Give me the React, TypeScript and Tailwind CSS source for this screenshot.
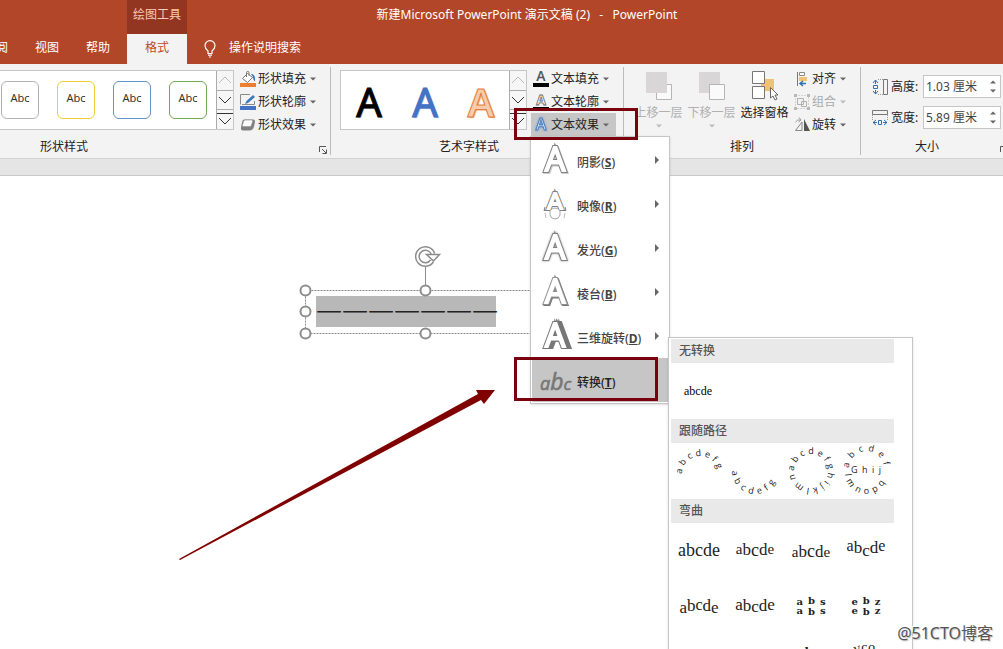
import React from 'react';

type IconKind = 'shadow' | 'reflection' | 'glow' | 'bevel' | 'rotate3d' | 'transform';

interface EffectItem {
  label: string;
  hotkey: string;
  icon: IconKind;
}

const shapeStyles = [
  'border-[#b0b0b0]',
  'border-[#f0cc3c]',
  'border-[#5f94cc]',
  'border-[#76a850]',
];

const effects: EffectItem[] = [
  { label: '阴影', hotkey: 'S', icon: 'shadow' },
  { label: '映像', hotkey: 'R', icon: 'reflection' },
  { label: '发光', hotkey: 'G', icon: 'glow' },
  { label: '棱台', hotkey: 'B', icon: 'bevel' },
  { label: '三维旋转', hotkey: 'D', icon: 'rotate3d' },
  { label: '转换', hotkey: 'T', icon: 'transform' },
];

// size and baseline of each letter in a warp preview
const warps: { size: number; y: number }[][] = [
  [18, 18, 18, 18, 18].map((size) => ({ size, y: 33 })),
  [{ size: 15, y: 31 }, { size: 17, y: 32 }, { size: 18, y: 33 }, { size: 17, y: 32 }, { size: 15, y: 31 }],
  [{ size: 15, y: 34 }, { size: 17, y: 34 }, { size: 18, y: 34 }, { size: 17, y: 34 }, { size: 15, y: 34 }],
  [{ size: 16, y: 28 }, { size: 17, y: 30 }, { size: 17, y: 33 }, { size: 17, y: 30 }, { size: 16, y: 28 }],
  [{ size: 17, y: 34 }, { size: 17, y: 32 }, { size: 16, y: 31 }, { size: 17, y: 32 }, { size: 17, y: 34 }],
  [{ size: 17, y: 31 }, { size: 17, y: 32 }, { size: 17, y: 33 }, { size: 17, y: 32 }, { size: 17, y: 31 }],
];

const Caret: React.FC<{ className?: string }> = ({ className = 'text-[#666]' }) => (
  <svg className={`h-1 w-[6px] shrink-0 ${className}`} viewBox="0 0 6 4" fill="currentColor" aria-hidden="true">
    <path d="M0 .5h6L3 3.5z" />
  </svg>
);

const Launcher: React.FC<{ label: string }> = ({ label }) => (
  <button aria-label={label} className="h-[10px] w-[10px] shrink-0 self-end">
    <svg viewBox="0 0 10 10" className="h-[10px] w-[10px]" fill="none" stroke="#555" aria-hidden="true">
      <path d="M1.5 7V1.5H8M4 4l4 4M8.5 4.5V8.5H4.5" />
    </svg>
  </button>
);

const GalleryScroll: React.FC = () => (
  <div className="flex w-[17px] shrink-0 flex-col border-l border-[#ababab] bg-[#f6f6f6]">
    <button aria-label="上一行" className="flex flex-1 items-center justify-center border-b border-[#ababab]">
      <svg viewBox="0 0 14 8" className="h-2 w-[14px]" fill="none" stroke="#bbb" aria-hidden="true">
        <path d="M1 7l6-6 6 6" />
      </svg>
    </button>
    <button aria-label="下一行" className="flex flex-1 items-center justify-center border-b border-[#ababab]">
      <svg viewBox="0 0 14 8" className="h-2 w-[14px]" fill="none" stroke="#333" aria-hidden="true">
        <path d="M1 1l6 6 6-6" />
      </svg>
    </button>
    <button aria-label="其他" className="flex flex-1 items-center justify-center">
      <svg viewBox="0 0 16 16" className="h-4 w-4" fill="none" stroke="#333" aria-hidden="true">
        <path d="M0 1.5h16M2 6l6 6 6-6" />
      </svg>
    </button>
  </div>
);

const BulbIcon = () => (
  <svg viewBox="0 0 12 18" className="h-[18px] w-3" fill="none" stroke="#fff" strokeWidth="1.2" aria-hidden="true">
    <path d="M4 13.5V11Q1 8.500 1 5.700a5 5 0 0 1 10 0Q11 8.500 8 11v2.500zM4 15.200h4M5 17h2" />
  </svg>
);

const FillIcon = () => (
  <svg viewBox="0 0 16 16" className="h-4 w-4 shrink-0" fill="none" aria-hidden="true">
    <path d="M7.5 2.500l5 4-5 5-5-4z" fill="#fff" stroke="#777" />
    <path d="M6.5 6V1.500c0-1.500 2.500-1.500 2.500 0v3" stroke="#777" />
    <path d="M11 3c3 0 4.500 2 4 7.500-1.500-1-2-3-2-4.500z" fill="#3b78b8" />
    <path d="M0 12h16v4H0z" fill="#ed7d31" />
  </svg>
);

const OutlineIcon = () => (
  <svg viewBox="0 0 16 16" className="h-4 w-4 shrink-0" fill="none" aria-hidden="true">
    <path d="M10 .5H.5v10M2 10.500h12.500V7" stroke="#8a8a8a" />
    <path d="M13 1l2 2-7 6-3 1 1.500-3z" fill="#3b78b8" />
    <path d="M0 12h16v4H0z" fill="#4472c4" />
  </svg>
);

const EffectIcon = () => (
  <svg viewBox="0 0 16 16" className="h-4 w-4 shrink-0" aria-hidden="true">
    <path d="M4 2.500h9.500q1.500 0 1.500 2l-1 5q-1 4-4.500 4H3q-2.500 0-2-3l1-5q.5-3 2-3z" fill="#808080" />
    <path d="M5 3h6.500q1.500 0 1 1.500l-1 3.500q-.5 1.500-2 1.500H3.500Q2 9.500 2.500 8l1-3.500Q4 3 5 3z" fill="#fff" stroke="#999" strokeWidth=".7" />
  </svg>
);

const TextFillIcon = () => (
  <svg viewBox="0 0 16 16" className="h-4 w-4 shrink-0 overflow-visible font-['Open_Sans',sans-serif]" aria-hidden="true">
    <text x="8" y="10" textAnchor="middle" fontSize="14" fontWeight="600" fill="#555">A</text>
    <path d="M0 12h16v4H0z" />
  </svg>
);

const TextOutlineIcon = () => (
  <svg viewBox="0 0 16 16" className="h-4 w-4 shrink-0 overflow-visible font-['Open_Sans',sans-serif]" aria-hidden="true">
    <text x="8" y="11" textAnchor="middle" fontSize="14" fontWeight="700" fill="#fff" stroke="#666" strokeWidth=".8">A</text>
    <path d="M0 13h16v3H0z" />
  </svg>
);

const TextEffectIcon = () => (
  <svg viewBox="0 0 16 16" className="h-4 w-4 shrink-0 overflow-visible font-['Open_Sans',sans-serif]" aria-hidden="true">
    <text
      x="8"
      y="13"
      textAnchor="middle"
      fontSize="16"
      fontWeight="600"
      fill="#e8f0fa"
      stroke="#4a7dbd"
      className="[filter:drop-shadow(0_0_1px_#6b9bd8)]"
    >
      A
    </text>
  </svg>
);

const AlignIcon = () => (
  <svg viewBox="0 0 16 16" className="h-4 w-4 shrink-0" fill="none" aria-hidden="true">
    <path d="M3.5 1v14" stroke="#777" />
    <path d="M5.5 1.500h5v3h-5z" stroke="#888" fill="#fff" />
    <path d="M5 6h8v4H5z" fill="#efc274" />
    <path d="M12 12.500H6M9 10l-3 2.500L9 15" stroke="#2f6fb2" strokeWidth="1.5" />
  </svg>
);

const GroupIcon = () => (
  <svg viewBox="0 0 16 16" className="h-4 w-4 shrink-0" fill="none" stroke="#b0b0b0" aria-hidden="true">
    <path d="M1.5 1.500h13v13h-13z" strokeDasharray="1 2" />
    <path d="M3.500 4.500h6v6h-6zM7.500 7.500h5v5h-5z" />
    <path d="M0 0h3v3H0zM13 0h3v3h-3zM0 13h3v3H0zM13 13h3v3h-3z" fill="#b8b8b8" stroke="none" />
  </svg>
);

const RotateIcon = () => (
  <svg viewBox="0 0 16 16" className="h-4 w-4 shrink-0" fill="none" aria-hidden="true">
    <path d="M10 2v12h6z" fill="#555" />
    <path d="M8 5v8.500H1.500z" stroke="#888" />
    <path d="M1.500 5q2-3 5-2M5 .5L7 3 4.500 5" stroke="#999" />
  </svg>
);

const HeightIcon = () => (
  <svg viewBox="0 0 16 16" className="h-4 w-4 shrink-0" fill="none" aria-hidden="true">
    <path d="M11.500.5h4v15h-4z" stroke="#777" />
    <path d="M6 .5h5M6 15.500h5" stroke="#999" strokeDasharray="1 1" />
    <path d="M3.500 1v4M1 4l2.500-3L6 4M3.500 15v-4M1 12l2.500 3L6 12M1.500 6.500h4v3h-4z" stroke="#2f6fb2" />
  </svg>
);

const WidthIcon = () => (
  <svg viewBox="0 0 16 16" className="h-4 w-4 shrink-0" fill="none" aria-hidden="true">
    <path d="M.5.5h15v4H.5z" stroke="#777" />
    <path d="M.5 5v5M15.500 5v5" stroke="#999" strokeDasharray="1 1" />
    <path d="M1 12.500h4M4 10l-3 2.500L4 15M15 12.500h-4M12 10l3 2.500-3 2.500M6.500 10.500h3v4h-3z" stroke="#2f6fb2" />
  </svg>
);

const ForwardIcon = () => (
  <svg viewBox="0 0 28 30" className="h-[30px] w-7" aria-hidden="true">
    <path d="M11.500 13.500h15v15h-15z" fill="#fafafa" stroke="#b5b5b5" />
    <path d="M1 1h21v21H1z" fill="#d8d6d7" />
  </svg>
);

const BackwardIcon = () => (
  <svg viewBox="0 0 28 30" className="h-[30px] w-7" aria-hidden="true">
    <path d="M1 1h21v21H1z" fill="#d8d6d7" />
    <path d="M11.500 13.500h15v15h-15z" fill="#fafafa" stroke="#b5b5b5" />
  </svg>
);

const SelectionPaneIcon = () => (
  <svg viewBox="0 0 28 30" className="h-[30px] w-7" fill="#fff" aria-hidden="true">
    <path d="M10 8h13v12H10z" fill="#efc274" />
    <path d="M1.500.5h12v12h-12zM1.500 15.500h12v12h-12z" stroke="#777" />
    <path d="M19.500 16.500v10.500l2.500-2 2 4 2-1-2-4h3z" stroke="#666" />
  </svg>
);

// hollow letter A used by the large entries of the effects menu
const HollowA: React.FC<{ halo?: string; size?: number; y?: number }> = ({ halo = '#808080', size = 32, y = 28 }) => (
  <>
    <text x="15" y={y} textAnchor="middle" fontSize={size} fontWeight="400" fill={halo} stroke={halo} strokeWidth="4">A</text>
    <text x="15" y={y} textAnchor="middle" fontSize={size} fontWeight="400" fill="#fff" stroke="#fff" strokeWidth="2">A</text>
  </>
);

const MenuIcon: React.FC<{ kind: IconKind }> = ({ kind }) => (
  <svg
    viewBox="0 0 30 34"
    className="h-[34px] w-[30px] shrink-0 overflow-visible font-['Open_Sans',sans-serif]"
    aria-hidden="true"
  >
    {kind === 'shadow' && (
      <g className="[filter:drop-shadow(1px_1px_0_#ccc)]">
        <HollowA />
      </g>
    )}
    {kind === 'reflection' && (
      <>
        <HollowA size={26} y={24} />
        <path d="M0 23h30v6H0z" fill="#fff" />
        <path d="M5 20l-1 3.500h6M25 20l1 3.500h-6" fill="none" stroke="#808080" />
        <path d="M5 26l1 5M25 26l-1 5" stroke="#bbb" />
        <path d="M10 24q2-3 5-3t5 3v4q-1 4-5 4t-5-4z" fill="#fff" stroke="#aaa" />
      </>
    )}
    {kind === 'glow' && (
      <g className="[filter:drop-shadow(0_0_1px_#999)]">
        <HollowA />
      </g>
    )}
    {kind === 'bevel' && (
      <g className="[filter:drop-shadow(1px_1px_0_#777)]">
        <HollowA halo="#909090" />
      </g>
    )}
    {kind === 'rotate3d' && (
      <g className="[filter:drop-shadow(2px_0_0_#777)_drop-shadow(2px_0_0_#777)]">
        <HollowA halo="#777" />
      </g>
    )}
    {kind === 'transform' && (
      <text x="0" y="27" fontStyle="italic" fontWeight="400" fill="#777" stroke="#777" strokeWidth=".6">
        <tspan fontSize="18">a</tspan>
        <tspan fontSize="23">b</tspan>
        <tspan fontSize="17">c</tspan>
      </text>
    )}
  </svg>
);

const MenuLine: React.FC<{
  icon: React.ReactNode;
  label: string;
  className?: string;
  disabled?: boolean;
}> = ({ icon, label, className = '', disabled }) => (
  <button disabled={disabled} className={`flex h-[23px] items-center gap-[2px] whitespace-nowrap ${className}`}>
    {icon}
    <span>{label}</span>
    <Caret className={disabled ? 'ml-[2px] text-[#bbb]' : 'ml-[2px] text-[#666]'} />
  </button>
);

const LargeButton: React.FC<{ icon: React.ReactNode; label: string; disabled?: boolean }> = ({
  icon,
  label,
  disabled,
}) => (
  <button
    disabled={disabled}
    className={`flex w-[53px] flex-col items-center whitespace-nowrap pt-1 ${disabled ? 'text-[#b0b0b0]' : ''}`}
  >
    {icon}
    <span className="mt-[3px] leading-[18px]">{label}</span>
    {disabled && <Caret className="mt-[2px] text-[#bbb]" />}
  </button>
);

const SizeField: React.FC<{ id: string; label: string; value: string; icon: React.ReactNode }> = ({
  id,
  label,
  value,
  icon,
}) => (
  <div className="flex h-[23px] items-center">
    {icon}
    <label htmlFor={id} className="ml-[3px] w-8 whitespace-nowrap">{label}</label>
    <div className="flex h-[23px] w-[78px] border border-[#c6c6c6] bg-white">
      <input id={id} defaultValue={value} className="w-[61px] min-w-0 pl-[2px] text-[#444] outline-none" />
      <div className="flex flex-1 flex-col justify-evenly">
        <button aria-label="增加" className="flex justify-center text-[#666]">
          <svg viewBox="0 0 6 4" className="h-1 w-[6px]" fill="currentColor"><path d="M0 3.500h6L3 .5z" /></svg>
        </button>
        <button aria-label="减少" className="flex justify-center">
          <Caret />
        </button>
      </div>
    </div>
  </div>
);

const PreviewHeader: React.FC<{ children: React.ReactNode }> = ({ children }) => (
  <h3 className="mr-[18px] flex h-6 items-center bg-[#e9e9e9] pl-2 font-medium text-[#555]">{children}</h3>
);

const previewClass = "h-14 w-14 overflow-visible font-['Open_Sans',sans-serif]";

const spaced = (letters: string, gap = '\u2002') => letters.split('').join(gap);

const FollowPathPreviews: React.FC = () => (
  <div className="mr-[18px] grid grid-cols-4">
    <button aria-label="拱形" className="h-14">
      <svg viewBox="0 0 56 56" className={previewClass} fill="#222">
        <path id="arch-up" d="M11 31A18 18 0 0 1 47 31" fill="none" />
        <text fontSize="9"><textPath href="#arch-up">{spaced('abcdefg', '\u2004')}</textPath></text>
      </svg>
    </button>
    <button aria-label="下拱形" className="h-14">
      <svg viewBox="0 0 56 56" className={previewClass} fill="#222">
        <path id="arch-down" d="M5 28A23 23 0 0 0 51 28" fill="none" />
        <text fontSize="9"><textPath href="#arch-down">{spaced('abcdefg')}</textPath></text>
      </svg>
    </button>
    <button aria-label="圆" className="h-14">
      <svg viewBox="0 0 56 56" className={previewClass} fill="#222">
        <path id="circle" d="M11 28A17 17 0 1 1 45 28A17 17 0 1 1 11 28" fill="none" />
        <text fontSize="9"><textPath href="#circle">{spaced('abcdefghijklmno', '\u2004')}</textPath></text>
      </svg>
    </button>
    <button aria-label="按钮" className="h-14">
      <svg viewBox="0 0 56 56" className={previewClass} fill="#222">
        <path id="button-top" d="M11 25A17 17 0 0 1 46 26" fill="none" />
        <path id="button-bottom" d="M7 31A21 21 0 0 0 49 29" fill="none" />
        <text fontSize="9"><textPath href="#button-top">{spaced('abcdef')}</textPath></text>
        <text x="28" y="30" fontSize="9" textAnchor="middle">{spaced('Ghij')}</text>
        <text fontSize="9"><textPath href="#button-bottom">{spaced('lmnopq')}</textPath></text>
      </svg>
    </button>
  </div>
);

const WarpPreviews: React.FC = () => (
  <div className="mr-[18px] grid grid-cols-4">
    {warps.map((letters, index) => (
      <button key={index} aria-label={`弯曲 ${index + 1}`} className="h-14">
        <svg viewBox="0 0 56 56" className="h-14 w-14 font-['Liberation_Serif',serif]" fill="#222">
          <text textAnchor="middle" x="28">
            {letters.map(({ size, y }, i) => (
              <tspan key={i} fontSize={size} dy={i === 0 ? y : y - letters[i - 1].y}>
                {'abcde'[i]}
              </tspan>
            ))}
          </text>
        </svg>
      </button>
    ))}
    {['abs', 'ebz'].map((ring) => (
      <button key={ring} aria-label="环形" className="h-14">
        <svg viewBox="0 0 56 56" className="h-14 w-14 font-['DejaVu_Serif',serif]" fill="#222" fontWeight="700">
          <text x="28" y="26" textAnchor="middle" fontSize="10">
            {ring[0]}
            <tspan dx="5" dy="-1">{ring[1]}</tspan>
            <tspan dx="5" dy="1">{ring[2]}</tspan>
          </text>
          <text x="28" y="35" textAnchor="middle" fontSize="10">
            {ring[0]}
            <tspan dx="5" dy="1">{ring[1]}</tspan>
            <tspan dx="5" dy="-1">{ring[2]}</tspan>
          </text>
        </svg>
      </button>
    ))}
    <span className="h-14" />
    <span className="h-14" />
    <button aria-label="弯曲 9" className="h-14">
      <svg viewBox="0 0 56 56" className="h-14 w-14 font-['Liberation_Serif',serif]" fill="#222">
        <text x="26" y="22" textAnchor="middle" fontSize="15" fontWeight="700">b</text>
      </svg>
    </button>
    <button aria-label="弯曲 10" className="h-14">
      <svg viewBox="0 0 56 56" className="h-14 w-14 font-['Liberation_Serif',serif]" fill="#222">
        <path id="bump" d="M17 19Q28 14 44 19" fill="none" />
        <text fontSize="14"><textPath href="#bump">vco</textPath></text>
      </svg>
    </button>
  </div>
);

const TransformPanel: React.FC = () => (
  <div className="absolute left-[137px] top-[200px] w-[245px] border border-[#c6c6c6] bg-white pl-[2px] pt-px shadow-sm">
    <PreviewHeader>无转换</PreviewHeader>
    <button className="flex h-14 w-14 items-center justify-center pr-[2px] font-['Liberation_Serif',serif] text-black">
      abcde
    </button>
    <PreviewHeader>跟随路径</PreviewHeader>
    <FollowPathPreviews />
    <PreviewHeader>弯曲</PreviewHeader>
    <WarpPreviews />
  </div>
);

const EffectsMenu: React.FC = () => (
  <div className="absolute left-[-1px] top-full z-10 w-[140px] border border-[#c6c6c6] bg-white p-px shadow-sm">
    {effects.map(({ label, hotkey, icon }) => {
      const active = icon === 'transform';
      return (
        <button
          key={hotkey}
          className={`flex h-11 w-full items-center whitespace-nowrap pl-2 pr-[9px] font-medium ${
            active ? 'bg-[#c6c6c6] text-[#222]' : 'text-[#444]'
          }`}
        >
          <MenuIcon kind={icon} />
          <span className="ml-[7px] flex-1 pt-[6px] text-left">
            {label}(<u className="font-bold">{hotkey}</u>)
          </span>
          {!active && (
            <svg viewBox="0 0 4 8" className="h-2 w-1 shrink-0" fill="#666" aria-hidden="true">
              <path d="M0 0l4 4-4 4z" />
            </svg>
          )}
        </button>
      );
    })}
    <TransformPanel />
  </div>
);

const TitleBar: React.FC = () => (
  <header className="bg-[#b24628] text-white">
    <div className="flex h-[34px] pl-[127px] leading-[18px]">
      <div className="w-[60px] bg-[#923622] pt-[6px] text-center text-[#f9c9b4]">绘图工具</div>
      <h1 className="flex-1 whitespace-pre pr-[136px] pt-[6px] text-center">
        {'新建Microsoft PowerPoint 演示文稿 (2)   -   PowerPoint'}
      </h1>
    </div>
    <nav className="flex h-[30px] whitespace-nowrap leading-[26px]">
      <div className="-ml-4 flex gap-[27px] pr-[17px]">
        <button className="pb-[2px]">审阅</button>
        <button className="pb-[2px]">视图</button>
        <button className="pb-[2px]">帮助</button>
      </div>
      <button className="w-[60px] bg-[#f3f3f3] pb-[2px] text-[#c0492a]">格式</button>
      <button className="ml-[17px] flex items-center gap-[13px]">
        <BulbIcon />
        <span className="pb-[2px]">操作说明搜索</span>
      </button>
    </nav>
  </header>
);

const Ribbon: React.FC = () => (
  <div className="border-b border-[#c9c9c9] bg-[#e5e5e5] pb-4">
    <div className="flex h-[95px] border-b border-[#d2d2d2] bg-[#f3f3f3] pb-[3px] pt-[3px]">
      <section className="flex w-[331px] shrink-0 flex-col border-r border-[#bbb]">
        <div className="flex h-[69px]">
          <div className="mt-[3px] flex h-[60px] w-[234px] border-y border-r border-[#c6c6c6] bg-white">
            <div className="flex flex-1 items-center gap-[18px] pl-px">
              {shapeStyles.map((border) => (
                <button
                  key={border}
                  className={`h-[38px] w-[38px] rounded-md border bg-white pb-[3px] text-[11px] text-[#333] ${border}`}
                >
                  Abc
                </button>
              ))}
            </div>
            <GalleryScroll />
          </div>
          <div className="ml-[6px]">
            <MenuLine icon={<FillIcon />} label="形状填充" />
            <MenuLine icon={<OutlineIcon />} label="形状轮廓" />
            <MenuLine icon={<EffectIcon />} label="形状效果" />
          </div>
        </div>
        <div className="flex flex-1 justify-between pl-10 pr-[2px] pt-[3px] leading-4">
          <span>形状样式</span>
          <Launcher label="形状样式设置" />
        </div>
      </section>

      <section className="flex w-[293px] shrink-0 flex-col border-r border-[#bbb]">
        <div className="flex h-[69px] pl-[9px]">
          <div className="mt-[3px] flex h-[60px] w-[187px] border border-[#c6c6c6] bg-white">
            <div className="grid flex-1 grid-cols-3 text-[40px] leading-[62px]">
              <button aria-label="填充: 黑色" className="text-black [-webkit-text-stroke:1px_#000] [text-shadow:1px_1px_1px_#bbb]">A</button>
              <button aria-label="填充: 蓝色" className="text-[#4472c4] [-webkit-text-stroke:1px_#4472c4] [text-shadow:1px_1px_1px_#9ab4e4]">A</button>
              <button aria-label="填充: 橙色" className="font-semibold text-[#f8cbad] [-webkit-text-stroke:1px_#e0803c] [text-shadow:1px_1px_1px_#e8a070]">A</button>
            </div>
            <GalleryScroll />
          </div>
          <div className="ml-1">
            <MenuLine icon={<TextFillIcon />} label="文本填充" className="w-[85px] pl-[2px]" />
            <MenuLine icon={<TextOutlineIcon />} label="文本轮廓" className="w-[85px] pl-[2px]" />
            <div className="relative">
              <MenuLine icon={<TextEffectIcon />} label="文本效果" className="w-[85px] bg-[#c6c6c6] pl-[2px]" />
              <EffectsMenu />
            </div>
          </div>
        </div>
        <div className="flex flex-1 justify-center pr-4 pt-[3px] leading-4">艺术字样式</div>
      </section>

      <section className="flex w-[237px] shrink-0 flex-col border-r border-[#bbb]">
        <div className="flex h-[69px] pl-2">
          <LargeButton icon={<ForwardIcon />} label="上移一层" disabled />
          <LargeButton icon={<BackwardIcon />} label="下移一层" disabled />
          <LargeButton icon={<SelectionPaneIcon />} label="选择窗格" />
          <div className="ml-[3px]">
            <MenuLine icon={<AlignIcon />} label="对齐" />
            <MenuLine icon={<GroupIcon />} label="组合" className="text-[#aaa]" disabled />
            <MenuLine icon={<RotateIcon />} label="旋转" />
          </div>
        </div>
        <div className="flex flex-1 justify-center pt-[3px] leading-4">排列</div>
      </section>

      <section className="flex w-[148px] shrink-0 flex-col">
        <div className="flex h-[69px] flex-col gap-2 pl-[11px] pt-2">
          <SizeField id="shape-height" label="高度:" value="1.03 厘米" icon={<HeightIcon />} />
          <SizeField id="shape-width" label="宽度:" value="5.89 厘米" icon={<WidthIcon />} />
        </div>
        <div className="flex flex-1 pt-[3px] leading-4">
          <span className="flex-1 pr-[6px] text-center">大小</span>
          <Launcher label="大小设置" />
        </div>
      </section>
    </div>
  </div>
);

const handles = [
  [6, 48],
  [126, 48],
  [6, 69],
  [6, 91],
  [126, 91],
];

const Slide: React.FC = () => (
  <main className="relative flex-1 bg-white">
    <div className="absolute left-[299px] top-[66px] h-[98px] w-[254px]">
      <svg viewBox="0 0 254 98" className="absolute inset-0" fill="none" stroke="#8c8c8c" aria-hidden="true">
        <path d="M6.500 48.500h240v43H6.500z" strokeDasharray="2 1" />
        <path d="M126.500 24v20" />
      </svg>
      <p className="absolute left-[17px] top-[54px] h-[31px] w-[180px] whitespace-nowrap bg-[#b8b8b8] font-['Noto_Sans_CJK_SC',sans-serif] text-[26px] font-light leading-[30px] text-[#222]">
        一一一一一一一
      </p>
      <svg viewBox="0 0 254 98" className="absolute inset-0" fill="#fff" stroke="#8c8c8c" aria-hidden="true">
        {handles.map(([x, y]) => (
          <circle key={`${x}-${y}`} cx={x + 0.5} cy={y + 0.5} r="5" strokeWidth="2" />
        ))}
        <path d="M133 19a8 8 0 1 1 1-7" fill="none" strokeWidth="5" />
        <path d="M133 19a8 8 0 1 1 1-7" fill="none" stroke="#fff" strokeWidth="2" />
        <path d="M127.500 12.500h13l-6 6.500z" strokeWidth="1.5" />
      </svg>
    </div>
  </main>
);

const App: React.FC = () => {
  return (
    <div className="relative flex h-screen flex-col overflow-hidden bg-white font-['Noto_Sans','Noto_Sans_CJK_SC',sans-serif] text-[12px] text-[#222]">
      <TitleBar />
      <Ribbon />
      <Slide />

      {/* step markers drawn over the window */}
      <div className="pointer-events-none absolute left-[514px] top-[108px] z-20 h-8 w-[124px] border-[3px] border-[#7a0010]" />
      <div className="pointer-events-none absolute left-[514px] top-[357px] z-20 h-11 w-[144px] border-[3px] border-[#7a0010]" />
      <svg
        viewBox="0 0 320 175"
        className="pointer-events-none absolute left-[177px] top-[387px] z-20 h-[175px] w-[320px]"
        aria-hidden="true"
      >
        <path d="M2 172L301 7l-2-4 19 0-11 14-3-4L3 173z" fill="#800000" />
      </svg>

      <div className="absolute bottom-1 right-[10px] z-20 text-[16px] leading-6 text-[#555] [text-shadow:-1px_-1px_0_#fff,1px_1px_1px_#bbb]">
        @51CTO博客
      </div>
    </div>
  );
};

export default App;
